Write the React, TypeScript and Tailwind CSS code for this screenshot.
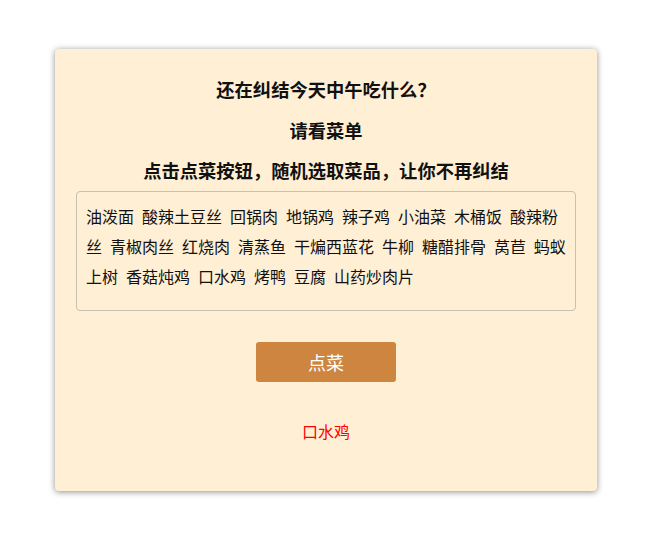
import React, { useState } from "react";

const dishes = [
  "油泼面", "酸辣土豆丝", "回锅肉", "地锅鸡", "辣子鸡", "小油菜", "木桶饭", "酸辣粉丝",
  "青椒肉丝", "红烧肉", "清蒸鱼", "干煸西蓝花", "牛柳", "糖醋排骨", "莴苣", "蚂蚁上树",
  "香菇炖鸡", "口水鸡", "烤鸭", "豆腐", "山药炒肉片",
];

export default function App() {
  const [picked, setPicked] = useState("口水鸡");
  return (
    <div className="w-[650px] h-[544px] bg-white pt-[49px] font-['Noto_Sans_CJK_SC',sans-serif]">
      {/* Card */}
      <div className="ml-[55px] w-[542px] h-[442px] bg-[#ffefd5] rounded-[4px] shadow-[0_1px_6px_rgba(0,0,0,0.45)] flex flex-col items-center pt-[29px]">
        <h3 className="text-[18.3px] leading-[22px] font-bold text-[#111]">还在纠结今天中午吃什么？</h3>
        <h3 className="mt-[19px] text-[18.3px] leading-[22px] font-bold text-[#111]">请看菜单</h3>
        <h3 className="mt-[18px] text-[18.3px] leading-[22px] font-bold text-[#111]">点击点菜按钮，随机选取菜品，让你不再纠结</h3>

        {/* Menu box */}
        <div className="mt-[10px] w-[500px] h-[120px] border border-[#c8c0b4] rounded-[4px] px-[9px] py-[9px] text-[16px] leading-[30px] text-[#111] [word-spacing:4.4px] break-all">
          {dishes.join(" ")}
        </div>

        <button
          className="mt-[31px] w-[140px] h-[40px] rounded-[3px] bg-[#cd853f] text-white text-[18px] leading-[40px]"
          onClick={() => setPicked(dishes[Math.floor(Math.random() * dishes.length)])}
        >
          点菜
        </button>

        <div className="mt-[39px] text-[16px] leading-[20px] text-[#ff0000]">{picked}</div>
      </div>
    </div>
  );
}
